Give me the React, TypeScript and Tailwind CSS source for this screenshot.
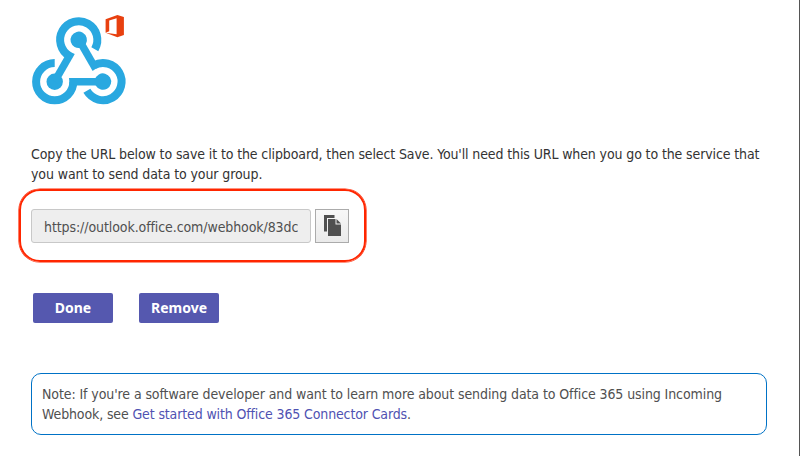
function WebhookLogo() {
  const arm = "M54.7 63.1A18.6 18.6 0 1 0 73.3 81.7";
  return (
    <svg className="block h-[96px] w-[97px]" viewBox="31 12 97 96" fill="none">
      {[0, 120, 240].map((angle) => (
        <g key={angle} transform={`rotate(${angle} 78.8 67.7)`}>
          <path d={arm} stroke="#29a8e0" strokeWidth="8" />
          <path d="M69 78H103V85.5H76.5L69.5 84Z" fill="#29a8e0" />
          <circle cx="54.7" cy="81.7" r="8.2" fill="#29a8e0" />
        </g>
      ))}
      <path
        fillRule="evenodd"
        fill="#e8400f"
        d="M105.6 19.3 117.4 15 123.9 16.9V35.1L117.4 37.2 105.6 32.8 116.6 34.2V18.3L109.2 20.4V31.2L105.6 32.8Z"
      />
    </svg>
  );
}

function CopyIcon() {
  return (
    <svg className="h-[21px] w-[17px]" viewBox="0 0 17 21">
      <path fill="#505050" d="M0 0H10.5V3H3V16.5H0Z" />
      <path fill="#505050" d="M4 4H11.5V9.5H17V21H4Z" />
      <path fill="#505050" d="M12.5 4 17 8.5H12.5Z" />
    </svg>
  );
}

export default function App() {
  return (
    <main className="h-[456px] w-[800px] overflow-hidden border-r border-[#555] bg-white pt-3 pl-[31px] font-['DejaVu_Sans_Condensed','DejaVu_Sans',sans-serif] text-[14px] leading-5 text-[#333] [font-stretch:condensed]">
      <WebhookLogo />
      <p className="mt-9 whitespace-nowrap">
        <span className="tracking-[-0.118px]">Copy the URL below to save it to the clipboard, then select Save. You'll need this URL when you go to the service that</span>
        <br />
        <span className="tracking-[-0.1px]">you want to send data to your group.</span>
      </p>
      <section className="mt-[5px] -ml-3 flex h-[73px] w-[347px] items-center gap-1 rounded-[21px] border-2 border-[#ff2600] pl-[10px] shadow-[0_0_0_0.6px_#ff2600]">
        <div className="flex h-[34px] w-[280px] items-center rounded-[3px] border border-[#c8c8c8] bg-[#eee] px-3 pt-0.5 text-[#505050]">
          <span className="w-full overflow-hidden tracking-[-0.09px] whitespace-nowrap">https://outlook.office.com/webhook/83dc</span>
        </div>
        <button aria-label="Copy" className="flex h-[34px] w-[34px] items-center justify-center border border-[#ababab] bg-linear-to-b from-[#f8f8f8] to-[#eaeaea]">
          <CopyIcon />
        </button>
      </section>
      <div className="mt-[31px] ml-0.5 flex gap-[26px] font-['Noto_Sans',sans-serif] font-bold text-white">
        <button className="h-[30px] w-20 rounded-[2px] bg-[#5558af]">Done</button>
        <button className="h-[30px] w-20 rounded-[2px] bg-[#5558af]">Remove</button>
      </div>
      <aside className="mt-[50px] h-[62px] w-[736px] rounded-[10px] border border-[#0072c6] px-[10px] pt-[10px] whitespace-nowrap text-[#505050]">
        <span className="tracking-[-0.096px]">Note: If you're a software developer and want to learn more about sending data to Office 365 using Incoming</span>
        <br />
        <span className="tracking-[-0.13px]">Webhook, see <a className="text-[#4f52b2]">Get started with Office 365 Connector Cards</a>.</span>
      </aside>
    </main>
  );
}
